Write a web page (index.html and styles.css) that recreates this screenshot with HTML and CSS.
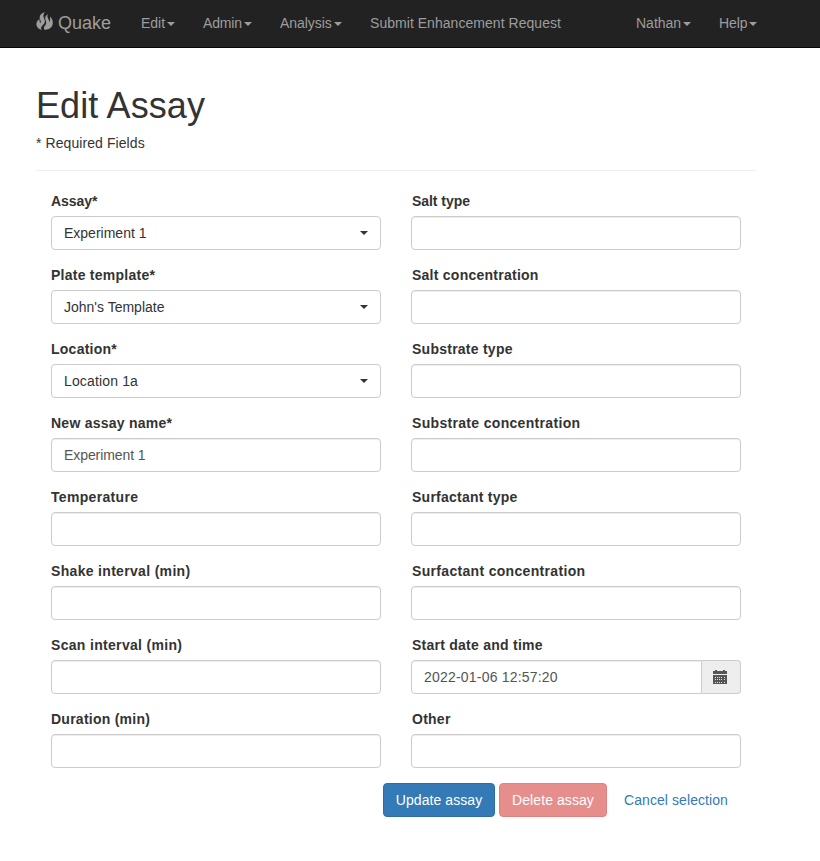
FILE: index.html
```html
<!DOCTYPE html>
<html lang="en">
<head>
<meta charset="utf-8">
<title>Edit Assay</title>
<link rel="stylesheet" href="styles.css">
</head>
<body>
<nav class="navbar">
  <a class="brand"><svg class="flame" viewBox="0 0 17 18"><path d="M8.800 0C4.500 1.300 2.700 4.300 4.100 7.600c.7 1.600 1.100 2.600.5 3.300-.9-.5-1.300-1.700-1-4C.2 8.800-.7 12.800 1.800 15.800c.9 1.100 2.200 1.800 4 2.100-1.400-1.500-.9-2.800.5-4.200C8.800 11.600 9.400 9.500 8.300 7 7 4.300 7.100 2.200 8.800 0zM12.100 2C9.200 3.600 8.700 5.800 9.600 8.200c1 2.600.6 4.300-.9 5.700-1.300 1.300-1.200 2.500.1 4 5.200-.4 8-3.100 8-7.100 0-2.700-1-4.600-2.800-6.200.3 2 .2 4.600-.7 5.500-.2-1.600-.5-2.500-1.200-3.600C11.100 4.800 11.200 3.400 12.100 2z"/></svg><span>Quake</span></a>
  <a class="nav-link edit">Edit<i class="caret"></i></a>
  <a class="nav-link admin">Admin<i class="caret"></i></a>
  <a class="nav-link analysis">Analysis<i class="caret"></i></a>
  <a class="nav-link submit">Submit Enhancement Request</a>
  <a class="nav-link user">Nathan<i class="caret"></i></a>
  <a class="nav-link help">Help<i class="caret"></i></a>
</nav>
<main class="container">
  <h1>Edit Assay</h1>
  <div class="note">* Required Fields</div>
  <hr>
  <form class="row">
    <div class="col">
      <div class="group"><label class="tight">Assay<span class="req">*</span></label><div class="control select"><span>Experiment 1</span><i class="caret"></i></div></div>
      <div class="group"><label>Plate template<span class="req">*</span></label><div class="control select"><span>John's Template</span><i class="caret"></i></div></div>
      <div class="group"><label>Location<span class="req">*</span></label><div class="control select wide"><span>Location 1a</span><i class="caret"></i></div></div>
      <div class="group"><label>New assay name<span class="req">*</span></label><input class="control narrow" value="Experiment 1"></div>
      <div class="group"><label class="spaced">Temperature</label><input class="control"></div>
      <div class="group"><label class="spaced">Shake interval (min)</label><input class="control"></div>
      <div class="group"><label class="spaced">Scan interval (min)</label><input class="control"></div>
      <div class="group"><label>Duration (min)</label><input class="control"></div>
    </div>
    <div class="col second">
      <div class="group"><label class="tight">Salt type</label><input class="control"></div>
      <div class="group"><label>Salt concentration</label><input class="control"></div>
      <div class="group"><label>Substrate type</label><input class="control"></div>
      <div class="group"><label class="spaced">Substrate concentration</label><input class="control"></div>
      <div class="group"><label>Surfactant type</label><input class="control"></div>
      <div class="group"><label class="spaced">Surfactant concentration</label><input class="control"></div>
      <div class="group"><label>Start date and time</label>
        <div class="input-group"><input class="control date" value="2022-01-06 12:57:20"><span class="addon"><svg width="14" height="14" viewBox="0 0 14 14" shape-rendering="crispEdges"><path fill="#555" d="M0 1h2V0h2v1h6V0h2v1h2v3H0zM0 5h14v9H0z"/><path fill="#ddd" d="M2 7h1v1H2zM4 7h1v1H4zM6 7h1v1H6zM8 7h1v1H8zM11 7h1v1h-1zM2 9h1v1H2zM4 9h1v1H4zM6 9h1v1H6zM8 9h1v1H8zM11 9h1v1h-1zM2 12h1v1H2zM4 12h1v1H4zM6 12h1v1H6zM8 12h1v1H8zM11 12h1v1h-1z"/></svg></span></div>
      </div>
      <div class="group"><label>Other</label><input class="control"></div>
    </div>
  </form>
  <div class="actions">
    <button class="btn primary">Update assay</button>
    <button class="btn danger">Delete assay</button>
    <button class="btn link">Cancel selection</button>
  </div>
</main>
</body>
</html>
```

FILE: styles.css
```css
* { box-sizing: border-box; }
body {
  margin: 0;
  font: 14px/20px "Liberation Sans", Arial, sans-serif;
  color: #333;
  background: #fff;
}
.navbar {
  display: flex;
  height: 48px;
  padding: 0 49px 0 36px;
  background: #222;
  border-bottom: 1px solid #080808;
  color: #9d9d9d;
}
.brand {
  display: flex;
  flex: none;
  width: 90px;
  padding-top: 12px;
  font-size: 18px;
  white-space: nowrap;
}
.brand span { margin: 1px 0 0 5px; }
.flame { width: 17px; height: 18px; fill: #9d9d9d; }
.nav-link { flex: none; padding: 13px 0 0 15px; white-space: nowrap; }
.edit { width: 62px; }
.admin { width: 77px; letter-spacing: -.15px; }
.analysis { width: 90px; letter-spacing: -.05px; }
.submit { letter-spacing: .04px; }
.user { width: 83px; margin-left: auto; }
.help { width: 67px; letter-spacing: -.1px; }
.caret {
  display: inline-block;
  margin-left: 2px;
  vertical-align: middle;
  border-top: 4px solid;
  border-right: 4px solid transparent;
  border-left: 4px solid transparent;
}
.container { width: 720px; margin: 0 0 0 36px; }
h1 {
  margin: 0;
  padding-top: 38px;
  font-size: 36px;
  line-height: 40px;
  font-weight: 400;
  letter-spacing: .1px;
}
.note { margin-top: 7px; letter-spacing: .08px; }
hr { margin: 17px 0 20px; border: 0; border-top: 1px solid #eee; }
.row { display: flex; }
.col { width: 360px; padding: 0 15px; }
.group { margin-bottom: 15px; }
label { display: block; margin-bottom: 5px; font-weight: 700; letter-spacing: .25px; }
.spaced { letter-spacing: .32px; }
.tight { letter-spacing: -.05px; }
.second label { padding-left: 1px; }
.req { letter-spacing: 0; }
.control {
  display: block;
  width: 100%;
  height: 34px;
  padding: 6px 12px;
  font: inherit;
  color: #555;
  background: #fff;
  border: 1px solid #ccc;
  border-radius: 4px;
  box-shadow: inset 0 1px 1px rgba(0, 0, 0, .075);
}
.select {
  display: flex;
  align-items: center;
  justify-content: space-between;
  color: #333;
  box-shadow: none;
}
.wide { letter-spacing: .15px; }
.narrow { letter-spacing: -.08px; }
.input-group { display: flex; }
.date { flex: 1; border-radius: 4px 0 0 4px; letter-spacing: .2px; }
.addon {
  display: flex;
  width: 39px;
  height: 34px;
  padding-right: 2px;
  align-items: center;
  justify-content: center;
  background: #eee;
  border: 1px solid #ccc;
  border-left: 0;
  border-radius: 0 4px 4px 0;
}
.actions { display: flex; justify-content: flex-end; gap: 4px; padding-right: 15px; }
.btn {
  height: 34px;
  padding: 6px 0;
  font: inherit;
  letter-spacing: .08px;
  border: 1px solid transparent;
  border-radius: 4px;
  white-space: nowrap;
}
.primary { width: 112px; color: #fff; background: #337ab7; border-color: #2e6da4; }
.danger { width: 108px; color: #fff; background: #d9534f; border-color: #d43f3a; opacity: .65; }
.link { width: 130px; color: #337ab7; background: transparent; }
```
